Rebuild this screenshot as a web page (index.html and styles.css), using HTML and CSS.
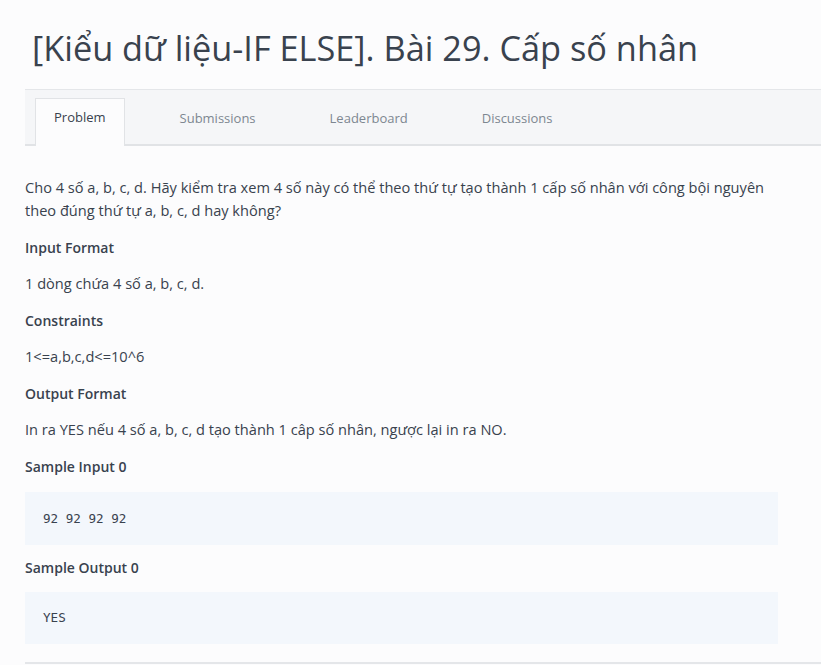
FILE: index.html
```html
<!DOCTYPE html>
<html lang="vi">
<head>
<meta charset="utf-8">
<title>Cấp số nhân</title>
<link rel="stylesheet" href="styles.css">
</head>
<body>
<div class="page">
  <h1 class="title">[Kiểu dữ liệu-IF ELSE]. Bài 29. Cấp số nhân</h1>
  <nav class="tabs">
    <span class="tab active">Problem</span>
    <span class="tab">Submissions</span>
    <span class="tab">Leaderboard</span>
    <span class="tab">Discussions</span>
  </nav>
  <div class="content">
    <p>Cho 4 số a, b, c, d. Hãy kiểm tra xem 4 số này có thể theo thứ tự tạo thành 1 cấp số nhân với công bội nguyên theo đúng thứ tự a, b, c, d hay không?</p>
    <h3>Input Format</h3>
    <p>1 dòng chứa 4 số a, b, c, d.</p>
    <h3>Constraints</h3>
    <p>1&lt;=a,b,c,d&lt;=10^6</p>
    <h3>Output Format</h3>
    <p>In ra YES nếu 4 số a, b, c, d tạo thành 1 câp số nhân, ngược lại in ra NO.</p>
    <h3 class="pre-code">Sample Input 0</h3>
    <pre class="code">92 92 92 92</pre>
    <h3 class="pre-code">Sample Output 0</h3>
    <pre class="code code-last">YES</pre>
  </div>
  <div class="footer-line"></div>
</div>
</body>
</html>
```

FILE: styles.css
```css
html, body {
  margin: 0;
  padding: 0;
  background: #fcfcfd;
}
body {
  font-family: "Open Sans", "Noto Sans", sans-serif;
  color: #39424e;
  overflow: hidden;
}
.page {
  padding-left: 25px;
}
.title {
  margin: 0;
  padding-top: 26px;
  padding-left: 7px;
  font-size: 34.3px;
  font-weight: 400;
  line-height: 44px;
  color: #39424e;
  height: 63px;
}
.tabs {
  display: flex;
  align-items: flex-end;
  height: 54px;
  background: #f5f6f8;
  border-top: 1px solid #e4e6e9;
  border-bottom: 2px solid #e1e3e6;
  padding-left: 10px;
  margin-right: -10px;
}
.tab {
  font-size: 13px;
  color: #7d8791;
  padding: 0 19px;
  height: 46px;
  line-height: 37px;
  margin-right: 36px;
  margin-bottom: -2px;
  box-sizing: border-box;
}
.tab.active {
  background: #fcfcfd;
  color: #39424e;
  border: 1px solid #e1e3e6;
  border-bottom: none;
  height: 48px;
  padding: 0 18px;
  line-height: 37px;
}
.content {
  width: 753px;
  padding-top: 30px;
}
.content p {
  margin: 0 0 14px;
  font-size: 14.6px;
  line-height: 22.5px;
}
.content h3 {
  margin: 0 0 12px;
  padding-top: 2px;
  font-size: 14px;
  font-weight: 600;
  line-height: 22.5px;
}
.content h3.pre-code {
  margin-bottom: 13px;
}
.code {
  margin: 0 0 10px;
  background: #f3f7fc;
  font-family: "DejaVu Sans Mono", monospace;
  font-size: 12.6px;
  color: #39424e;
  height: 53px;
  line-height: 53px;
  padding: 0 18px;
  box-sizing: border-box;
}
.code-last {
  height: 52px;
  line-height: 52px;
}
.footer-line {
  margin-top: 18px;
  border-top: 2px solid #e4e6e9;
  margin-right: -10px;
}
```
